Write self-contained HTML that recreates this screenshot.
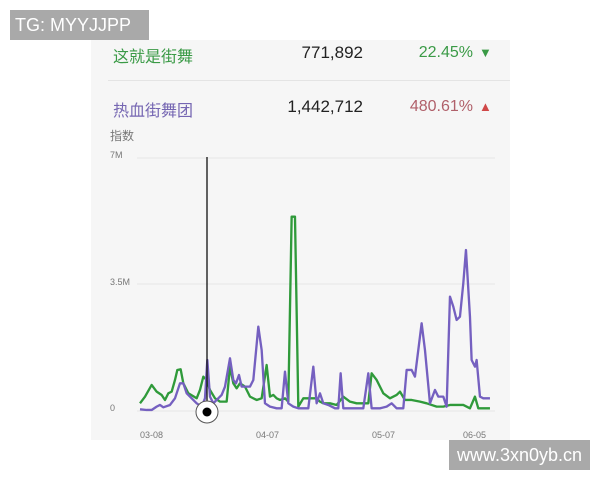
<!DOCTYPE html>
<html><head><meta charset="utf-8"><style>
body{margin:0;width:600px;height:480px;background:#fff;position:relative;overflow:hidden;font-family:"Liberation Sans","Noto Sans CJK SC",sans-serif}
.card{position:absolute;left:91px;top:40px;width:419px;height:400px;background:#f6f6f6}
.wm{position:absolute;background:#a9a9a9;color:#fff;font-size:18px;line-height:30px}
.t{position:absolute;font-size:17px;white-space:nowrap}
.s{position:absolute;font-size:9px;color:#777}
</style></head><body>
<div class="card"></div>
<div class="wm" style="left:10px;top:10px;width:139px;height:30px;padding-left:5px;box-sizing:border-box">TG: MYYJJPP</div>
<div class="t" style="left:113px;top:43px;color:#3a9a46;font-size:16px">这就是街舞</div>
<div class="t" style="right:237px;top:43px;color:#222">771,892</div>
<div class="t" style="right:127px;top:44px;color:#3a9a46;font-size:16px">22.45%</div>
<div class="t" style="left:479px;top:45px;color:#3a9a46;font-size:13px">▼</div>
<div style="position:absolute;left:108px;top:80px;width:402px;height:1px;background:#e4e4e4"></div>
<div class="t" style="left:113px;top:97px;color:#7566b2;font-size:16px">热血街舞团</div>
<div class="t" style="right:237px;top:97px;color:#222">1,442,712</div>
<div class="t" style="right:127px;top:98px;color:#b0606a;font-size:16px">480.61%</div>
<div class="t" style="left:479px;top:99px;color:#d04848;font-size:13px">▲</div>
<div class="s" style="left:110px;top:127px;font-size:12px">指数</div>
<div class="s" style="left:110px;top:150px">7M</div>
<div class="s" style="left:110px;top:277px">3.5M</div>
<div class="s" style="left:110px;top:403px">0</div>
<div class="s" style="left:140px;top:430px">03-08</div>
<div class="s" style="left:256px;top:430px">04-07</div>
<div class="s" style="left:372px;top:430px">05-07</div>
<div class="s" style="left:463px;top:430px">06-05</div>
<svg style="position:absolute;left:0;top:0" width="600" height="480">
<g stroke="#e6e6e6" stroke-width="1"><line x1="137" y1="158" x2="495" y2="158"/><line x1="137" y1="284" x2="495" y2="284"/><line x1="137" y1="411" x2="495" y2="411"/></g>
<g transform="translate(90,150) scale(0.3333)" fill="none" stroke-width="7" stroke-linejoin="round">
<polyline stroke="#2f9a3a" points="150,760 165,740 185,705 200,725 215,735 225,750 235,730 245,725 255,690 262,660 272,658 280,700 295,730 320,745 330,720 340,680 350,690 360,720 375,745 390,755 410,755 420,650 430,700 440,715 450,700 465,710 480,740 500,750 515,745 530,645 540,740 550,735 560,745 570,750 585,745 595,755 605,200 615,200 625,770 640,745 660,745 680,745 690,755 700,760 720,760 740,765 760,740 780,755 800,760 820,760 835,760 845,670 860,690 880,730 900,745 920,735 930,725 945,750 965,750 990,755 1010,760 1040,770 1060,770 1080,765 1100,765 1120,765 1140,775 1155,740 1165,775 1200,775"/>
<polyline stroke="#7560c0" points="150,778 170,780 185,780 200,770 210,765 220,772 240,765 255,745 270,700 280,700 290,730 305,745 320,760 335,770 345,745 352,630 360,740 370,760 380,750 395,735 405,710 420,625 430,690 438,700 447,675 455,710 470,710 480,710 490,690 505,530 515,600 525,760 540,770 560,775 575,775 585,665 595,760 610,770 625,775 640,775 655,775 670,650 680,760 690,730 700,760 715,765 735,775 745,775 752,670 760,775 780,775 800,775 820,775 835,670 845,775 870,775 890,770 905,760 920,775 940,775 950,660 965,660 975,680 995,520 1005,600 1020,760 1035,720 1045,740 1060,740 1070,770 1080,440 1090,470 1100,510 1110,500 1120,400 1128,300 1140,500 1145,630 1155,650 1160,630 1170,740 1180,745 1200,745"/>
</g>
<line x1="207" y1="157" x2="207" y2="408" stroke="#111" stroke-width="1.3"/>
<circle cx="207" cy="412" r="11" fill="#fff" stroke="#555" stroke-width="1"/>
<circle cx="207" cy="412" r="4.5" fill="#000"/>
</svg>
<div class="wm" style="left:449px;top:440px;width:141px;height:30px;text-align:center">www.3xn0yb.cn</div>
</body></html>
